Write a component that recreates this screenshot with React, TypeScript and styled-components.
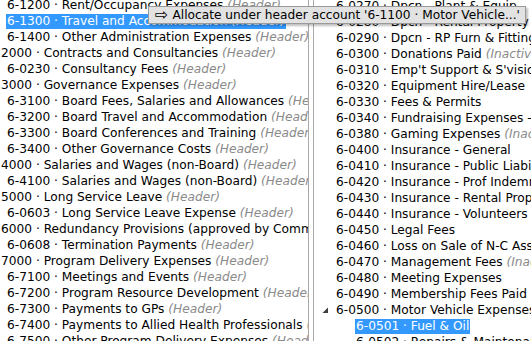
import styled, { createGlobalStyle } from "styled-components"

const GlobalStyle = createGlobalStyle`
  html, body {
    margin: 0;
    padding: 0;
    background: #fff;
  }
  body {
    font-family: "DejaVu Sans", Verdana, sans-serif;
    font-size: 12.2px;
    color: #000;
  }
`

const Frame = styled.div`
  position: relative;
  display: flex;
  width: 531px;
  height: 341px;
  overflow: hidden;
  background: #fff;
`

const LeftPane = styled.div`
  box-sizing: border-box;
  width: 309px;
  flex: none;
  border-right: 1px solid #a9a9a9;
  overflow: hidden;
`

const Splitter = styled.div`
  width: 4px;
  flex: none;
  background: #fff;
`

const RightPane = styled.div`
  flex: 1;
  min-width: 0;
  border-left: 1px solid #a9a9a9;
  overflow: hidden;
`

const Tree = styled.div<{ $offset: number }>`
  margin-top: ${(p) => p.$offset}px;
  display: flex;
  flex-direction: column;
`

const Row = styled.div<{ $indent: number }>`
  display: flex;
  align-items: center;
  height: 16px;
  padding-left: ${(p) => p.$indent}px;
  white-space: nowrap;
`

const Expander = styled.span`
  display: inline-flex;
  align-items: center;
  width: 13px;
  height: 16px;
  flex: none;
`

const Label = styled.span<{ $selected?: boolean }>`
  display: inline-block;
  height: 15px;
  line-height: 15px;
  padding: 0 1px;
  background: ${(p) => (p.$selected ? "#3399ff" : "transparent")};
  color: ${(p) => (p.$selected ? "#fff" : "#000")};
`

const Note = styled.span<{ $selected?: boolean }>`
  font-style: italic;
  color: ${(p) => (p.$selected ? "#fff" : "#8a8a8a")};
`

const Tooltip = styled.div`
  position: absolute;
  left: 148px;
  top: 6px;
  height: 16px;
  display: flex;
  align-items: center;
  gap: 4px;
  padding: 0 5px 0 6px;
  background: #e2e2e2;
  border: 1px solid #9a9a9a;
  box-shadow: 2px 2px 2px rgba(0, 0, 0, 0.25);
  white-space: nowrap;
`

const Arrow = styled.span`
  font-size: 16px;
  line-height: 16px;
`

type Item = {
  text: string
  note?: string
  indent: number
  selected?: boolean
  expanded?: boolean
}

const leftItems: Item[] = [
  { text: "6-1200 · Rent/Occupancy Expenses", note: "(Header)", indent: 6 },
  { text: "6-1300 · Travel and Accommodation", note: "(Header)", indent: 6, selected: true },
  { text: "6-1400 · Other Administration Expenses", note: "(Header)", indent: 6 },
  { text: "2000 · Contracts and Consultancies", note: "(Header)", indent: 0 },
  { text: "6-0230 · Consultancy Fees", note: "(Header)", indent: 6 },
  { text: "3000 · Governance Expenses", note: "(Header)", indent: 0 },
  { text: "6-3100 · Board Fees, Salaries and Allowances", note: "(Header)", indent: 6 },
  { text: "6-3200 · Board Travel and Accommodation", note: "(Header)", indent: 6 },
  { text: "6-3300 · Board Conferences and Training", note: "(Header)", indent: 6 },
  { text: "6-3400 · Other Governance Costs", note: "(Header)", indent: 6 },
  { text: "4000 · Salaries and Wages (non-Board)", note: "(Header)", indent: 0 },
  { text: "6-4100 · Salaries and Wages (non-Board)", note: "(Header)", indent: 6 },
  { text: "5000 · Long Service Leave", note: "(Header)", indent: 0 },
  { text: "6-0603 · Long Service Leave Expense", note: "(Header)", indent: 6 },
  { text: "6000 · Redundancy Provisions (approved by Committee)", note: "(Header)", indent: 0 },
  { text: "6-0608 · Termination Payments", note: "(Header)", indent: 6 },
  { text: "7000 · Program Delivery Expenses", note: "(Header)", indent: 0 },
  { text: "6-7100 · Meetings and Events", note: "(Header)", indent: 6 },
  { text: "6-7200 · Program Resource Development", note: "(Header)", indent: 6 },
  { text: "6-7300 · Payments to GPs", note: "(Header)", indent: 6 },
  { text: "6-7400 · Payments to Allied Health Professionals", note: "(Header)", indent: 6 },
  { text: "6-7500 · Other Program Delivery Expenses", note: "(Header)", indent: 6 },
]

const rightItems: Item[] = [
  { text: "6-0270 · Dpcn - Plant & Equip", indent: 21 },
  { text: "6-0280 · Dpcn - Rental Property", indent: 21 },
  { text: "6-0290 · Dpcn - RP Furn & Fittings", indent: 21 },
  { text: "6-0300 · Donations Paid", note: "(Inactive)", indent: 21 },
  { text: "6-0310 · Emp't Support & S'vision", indent: 21 },
  { text: "6-0320 · Equipment Hire/Lease", indent: 21 },
  { text: "6-0330 · Fees & Permits", indent: 21 },
  { text: "6-0340 · Fundraising Expenses - Other", indent: 21 },
  { text: "6-0380 · Gaming Expenses", note: "(Inactive)", indent: 21 },
  { text: "6-0400 · Insurance - General", indent: 21 },
  { text: "6-0410 · Insurance - Public Liability", indent: 21 },
  { text: "6-0420 · Insurance - Prof Indemnity", indent: 21 },
  { text: "6-0430 · Insurance - Rental Property", indent: 21 },
  { text: "6-0440 · Insurance - Volunteers", indent: 21 },
  { text: "6-0450 · Legal Fees", indent: 21 },
  { text: "6-0460 · Loss on Sale of N-C Assets", indent: 21 },
  { text: "6-0470 · Management Fees", note: "(Inactive)", indent: 21 },
  { text: "6-0480 · Meeting Expenses", indent: 21 },
  { text: "6-0490 · Membership Fees Paid", indent: 21 },
  { text: "6-0500 · Motor Vehicle Expenses", indent: 8, expanded: true },
  { text: "6-0501 · Fuel & Oil", indent: 41, selected: true },
  { text: "6-0502 · Repairs & Maintenance", indent: 41 },
]

const ExpandedGlyph = () => (
  <svg width="7" height="7" viewBox="0 0 7 7">
    <polygon points="6,0.5 6,6 0.5,6" fill="#3c3c3c" />
  </svg>
)

const TreeRow = ({ item }: { item: Item }) => (
  <Row $indent={item.indent}>
    {item.expanded && (
      <Expander>
        <ExpandedGlyph />
      </Expander>
    )}
    <Label $selected={item.selected}>
      {item.text}
      {item.note && (
        <>
          {" "}
          <Note $selected={item.selected}>{item.note}</Note>
        </>
      )}
    </Label>
  </Row>
)

export default function App() {
  return (
    <>
      <GlobalStyle />
      <Frame>
        <LeftPane>
          <Tree $offset={-3}>
            {leftItems.map((item) => (
              <TreeRow key={item.text} item={item} />
            ))}
          </Tree>
        </LeftPane>
        <Splitter />
        <RightPane>
          <Tree $offset={-2}>
            {rightItems.map((item) => (
              <TreeRow key={item.text} item={item} />
            ))}
          </Tree>
        </RightPane>
        <Tooltip>
          <Arrow>⇨</Arrow>
          <span>Allocate under header account '6-1100 · Motor Vehicle...'</span>
        </Tooltip>
      </Frame>
    </>
  )
}
